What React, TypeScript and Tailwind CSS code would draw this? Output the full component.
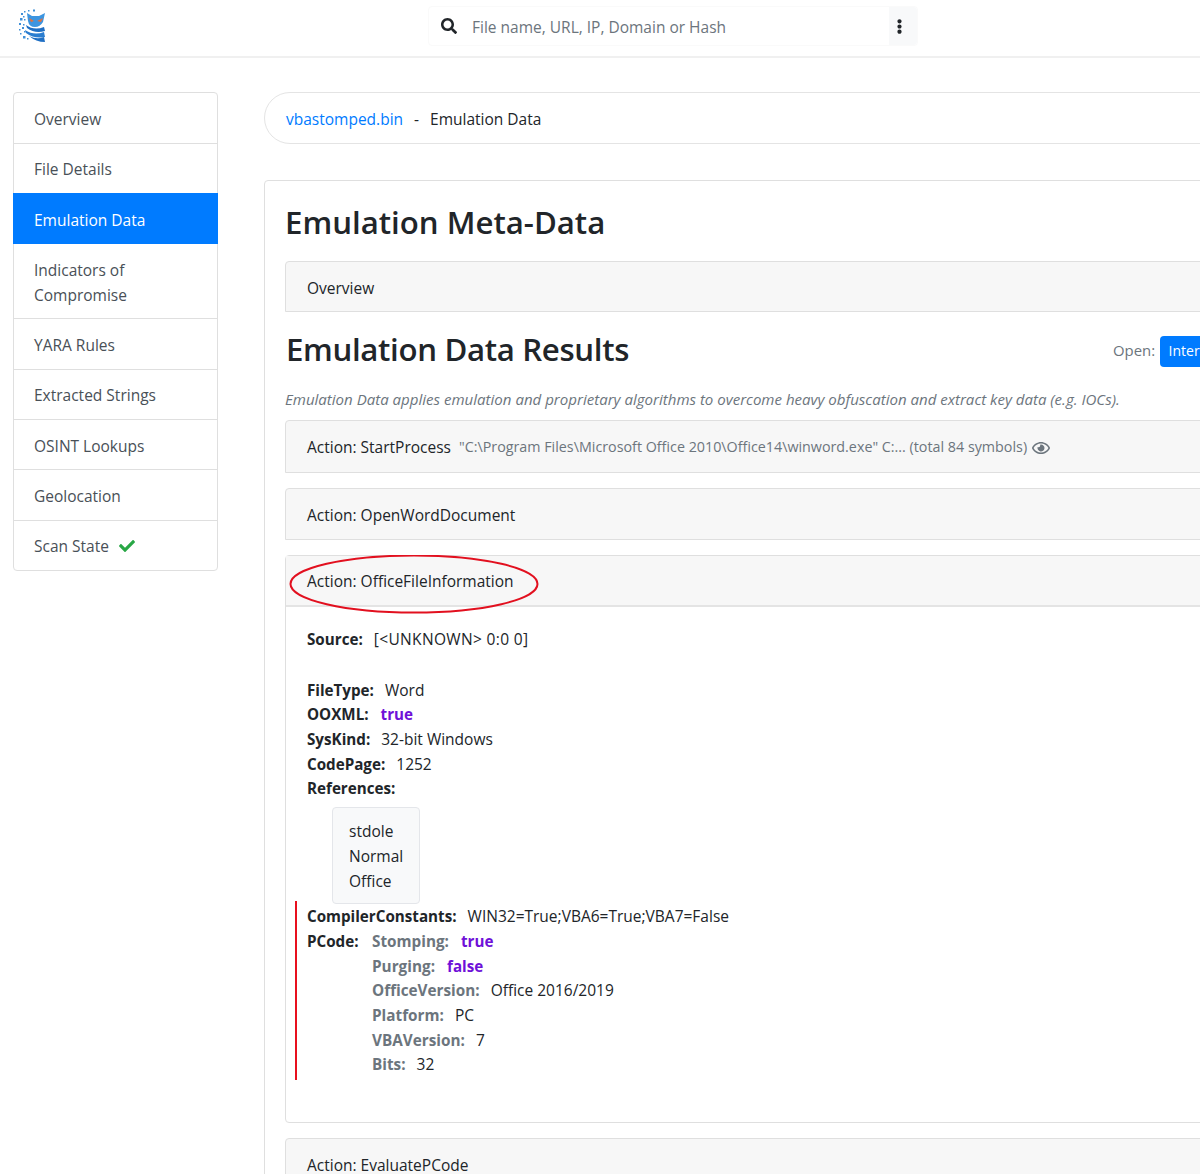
import { FaSearch, FaEllipsisV, FaCheck, FaRegEye } from 'react-icons/fa'

const navItems = ['Overview', 'File Details', 'Emulation Data', 'Indicators of Compromise', 'YARA Rules', 'Extracted Strings', 'OSINT Lookups', 'Geolocation']

function Logo() {
  return (
    <svg width="30" height="34" viewBox="0 0 30 34" className="block">
      <g fill="#3f8fd8">
        <rect x="3" y="4" width="2" height="2" />
        <rect x="6" y="2" width="1.5" height="1.5" />
        <rect x="10" y="1" width="1.5" height="1.5" />
        <rect x="2" y="9" width="2.5" height="2.5" />
        <rect x="6" y="10" width="1.5" height="1.5" />
        <rect x="1" y="14" width="2" height="2" />
        <rect x="5" y="15" width="1.5" height="1.5" />
        <rect x="4" y="18" width="2" height="2" />
        <rect x="1" y="20" width="1.5" height="1.5" />
        <rect x="2" y="24" width="1.5" height="1.5" />
        <rect x="6" y="22" width="1.5" height="1.5" />
        <rect x="5" y="27" width="2.5" height="2.5" />
        <rect x="9" y="29" width="1.5" height="1.5" />
        <rect x="5" y="7" width="1.5" height="1.5" />
        <rect x="15" y="0.5" width="2" height="2" />
      </g>
      <path d="M9 4 L14 7 L21 7 L27 4 L25 13 Q22 18 17 18 Q11 18 10 12 Z" fill="#3d95e0" />
      <path d="M11 9 L16 12 L13 13 Z M25 9 L19 12 L23 13 Z" fill="#e8703a" />
      <path d="M8 16 Q16 22 26 18 L27 22 Q17 25 9 19 Z" fill="#1f6fc4" />
      <path d="M7 21 Q16 27 26 23 L27 28 Q16 30 8 24 Z" fill="#2a7dd0" />
      <path d="M11 27 Q19 31 26 28 L27 33 Q18 33 11 27 Z" fill="#1f6fc4" />
    </svg>
  )
}

function ActionHeader({ children, className }: { children: React.ReactNode; className: string }) {
  return (
    <div className={`flex items-center rounded-t border border-[#dfdfdf] bg-[#f7f7f7] pl-[21px] pt-[3px] ${className}`}>
      {children}
    </div>
  )
}

function Field({ label, children, muted }: { label: string; children?: React.ReactNode; muted?: boolean }) {
  return (
    <div className="h-[24.7px] whitespace-nowrap">
      <b className={muted ? 'text-[15.3px] font-bold text-[#6c757d]' : 'text-[15.2px] font-bold text-[#212529]'}>{label}:</b>
      <span className="ml-[11px]">{children}</span>
    </div>
  )
}

function Flag({ children }: { children: string }) {
  return <b className="ml-px text-[15.2px] font-bold text-[#6f10d8]">{children}</b>
}

function navClass(item: string, i: number) {
  if (item === 'Emulation Data') {
    return 'relative -mx-px -mb-px border-t border-[#007bff] bg-[#007bff] pb-[11px] pl-[21px] pr-[20px] pt-[14.7px] text-white'
  }
  if (i === 0) return 'px-[20px] pb-[12px] pt-[13.7px]'
  if (i === 1) return 'border-t border-[#dfdfdf] px-[20px] pb-[11px] pt-[12.7px]'
  return 'border-t border-[#dfdfdf] px-[20px] pb-[11px] pt-[13.7px]'
}

export default function App() {
  return (
    <div className="relative h-[1174px] w-[1200px] overflow-hidden bg-white font-['Open_Sans','Noto_Sans',sans-serif] text-[15.5px] leading-[24.7px] text-[#212529]">
      <header className="flex h-[58px] items-start border-b-2 border-[#f0f0f0]">
        <div className="ml-[18px] mt-[9px] w-[410px]">
          <Logo />
        </div>
        <div className="mt-[6px] flex h-[40px] w-[490px] items-center rounded border border-[#fafafa]">
          <FaSearch className="ml-[12px] text-[16px] text-[#212529]" />
          <span className="ml-[15px] flex-1 pt-[2px] text-[#6c757d]">File name, URL, IP, Domain or Hash</span>
          <div className="flex h-full w-[28px] items-center rounded-r bg-[#f8f9fa] pl-[3px]">
            <FaEllipsisV className="text-[15px] text-[#212529]" />
          </div>
        </div>
      </header>

      <div className="flex items-start pl-[13px] pt-[34px]">
        <nav className="w-[205px] shrink-0 rounded border border-[#dfdfdf] text-[#495057]">
          {navItems.map((item, i) => (
            <div key={item} className={navClass(item, i)}>
              {item}
            </div>
          ))}
          <div className="flex items-center border-t border-[#dfdfdf] px-[20px] pb-[11.5px] pt-[13.2px]">
            Scan State
            <FaCheck className="ml-[10px] text-[16px] text-[#28a745]" />
          </div>
        </nav>

        <main className="ml-[46px] w-[1000px] shrink-0">
          <div className="flex h-[52px] items-center rounded-[26px] border border-[#e4e4e4] pl-[21px] pt-[2px]">
            <span className="text-[#007bff]">vbastomped.bin</span>
            <span className="mx-[11px]">-</span>
            <span>Emulation Data</span>
          </div>

          <div className="mt-[36px] h-[1100px] rounded border border-[#dfdfdf] pl-[20px] pt-[19px]">
            <h1 className="text-[31.2px] font-semibold leading-[44px]">Emulation Meta-Data</h1>
            <ActionHeader className="mt-[17px] h-[51px]">Overview</ActionHeader>

            <div className="mt-[15px] flex h-[44px] items-center whitespace-nowrap">
              <h1 className="w-[828px] shrink-0 pl-px text-[31.2px] font-semibold leading-[44px] tracking-[-0.33px]">Emulation Data Results</h1>
              <span className="shrink-0 pt-[2px] text-[14.9px] text-[#6c757d]">Open:</span>
              <span className="ml-[4.5px] mt-[4px] flex h-[31px] w-[120px] shrink-0 items-center rounded-[4px] bg-[#007bff] pl-[9px] text-[14px] text-white">
                Interesting
              </span>
            </div>

            <p className="mt-[16px] whitespace-nowrap text-[15.05px] italic text-[#6c757d]">
              Emulation Data applies emulation and proprietary algorithms to overcome heavy obfuscation and extract key data (e.g. IOCs).
            </p>

            <ActionHeader className="mt-[8px] h-[53px] whitespace-nowrap">
              Action: StartProcess
              <span className="ml-[8px] text-[14.3px] text-[#6c757d]">"C:\Program Files\Microsoft Office 2010\Office14\winword.exe" C:... (total 84 symbols)</span>
              <FaRegEye className="ml-[5px] text-[18px] text-[#6c757d]" />
            </ActionHeader>

            <ActionHeader className="mt-[15px] h-[52px]">Action: OpenWordDocument</ActionHeader>

            <div className="relative mt-[15px] rounded border border-[#dfdfdf]">
              <div className="flex h-[51px] items-center border-b-2 border-[#e4e4e4] bg-[#f7f7f7] pl-[21px] pt-[3px]">Action: OfficeFileInformation</div>
              <div className="h-[515px] pl-[21px] pt-[20px]">
                <Field label="Source"><span className="tracking-[0.35px]">[&lt;UNKNOWN&gt; 0:0 0]</span></Field>
                <div className="h-[26.3px]" />
                <Field label="FileType">Word</Field>
                <Field label="OOXML"><Flag>true</Flag></Field>
                <Field label="SysKind">32-bit Windows</Field>
                <Field label="CodePage">1252</Field>
                <Field label="References" />
                <div className="ml-[25px] mt-[6px] w-[88px] rounded border border-[#e4e6ea] bg-[#f8f9fa] pb-[10px] pl-[16px] pt-[11px]">
                  <div>stdole</div>
                  <div>Normal</div>
                  <div>Office</div>
                </div>
                <Field label="CompilerConstants">WIN32=True;VBA6=True;VBA7=False</Field>
                <div className="flex">
                  <b className="w-[65px] text-[15.2px] font-bold">PCode:</b>
                  <div>
                    <Field label="Stomping" muted><Flag>true</Flag></Field>
                    <Field label="Purging" muted><Flag>false</Flag></Field>
                    <Field label="OfficeVersion" muted>Office 2016/2019</Field>
                    <Field label="Platform" muted>PC</Field>
                    <Field label="VBAVersion" muted>7</Field>
                    <Field label="Bits" muted>32</Field>
                  </div>
                </div>
              </div>
              <svg width="252" height="62" className="absolute left-[2px] top-[-1px]">
                <ellipse cx="126" cy="29" rx="123.5" ry="28.5" fill="none" stroke="#e2101f" strokeWidth="2" />
              </svg>
              <div className="absolute left-[9px] top-[345px] h-[179px] w-[2px] bg-[#e8101e]" />
            </div>

            <ActionHeader className="mt-[15px] h-[52px]">Action: EvaluatePCode</ActionHeader>
          </div>
        </main>
      </div>
    </div>
  )
}
